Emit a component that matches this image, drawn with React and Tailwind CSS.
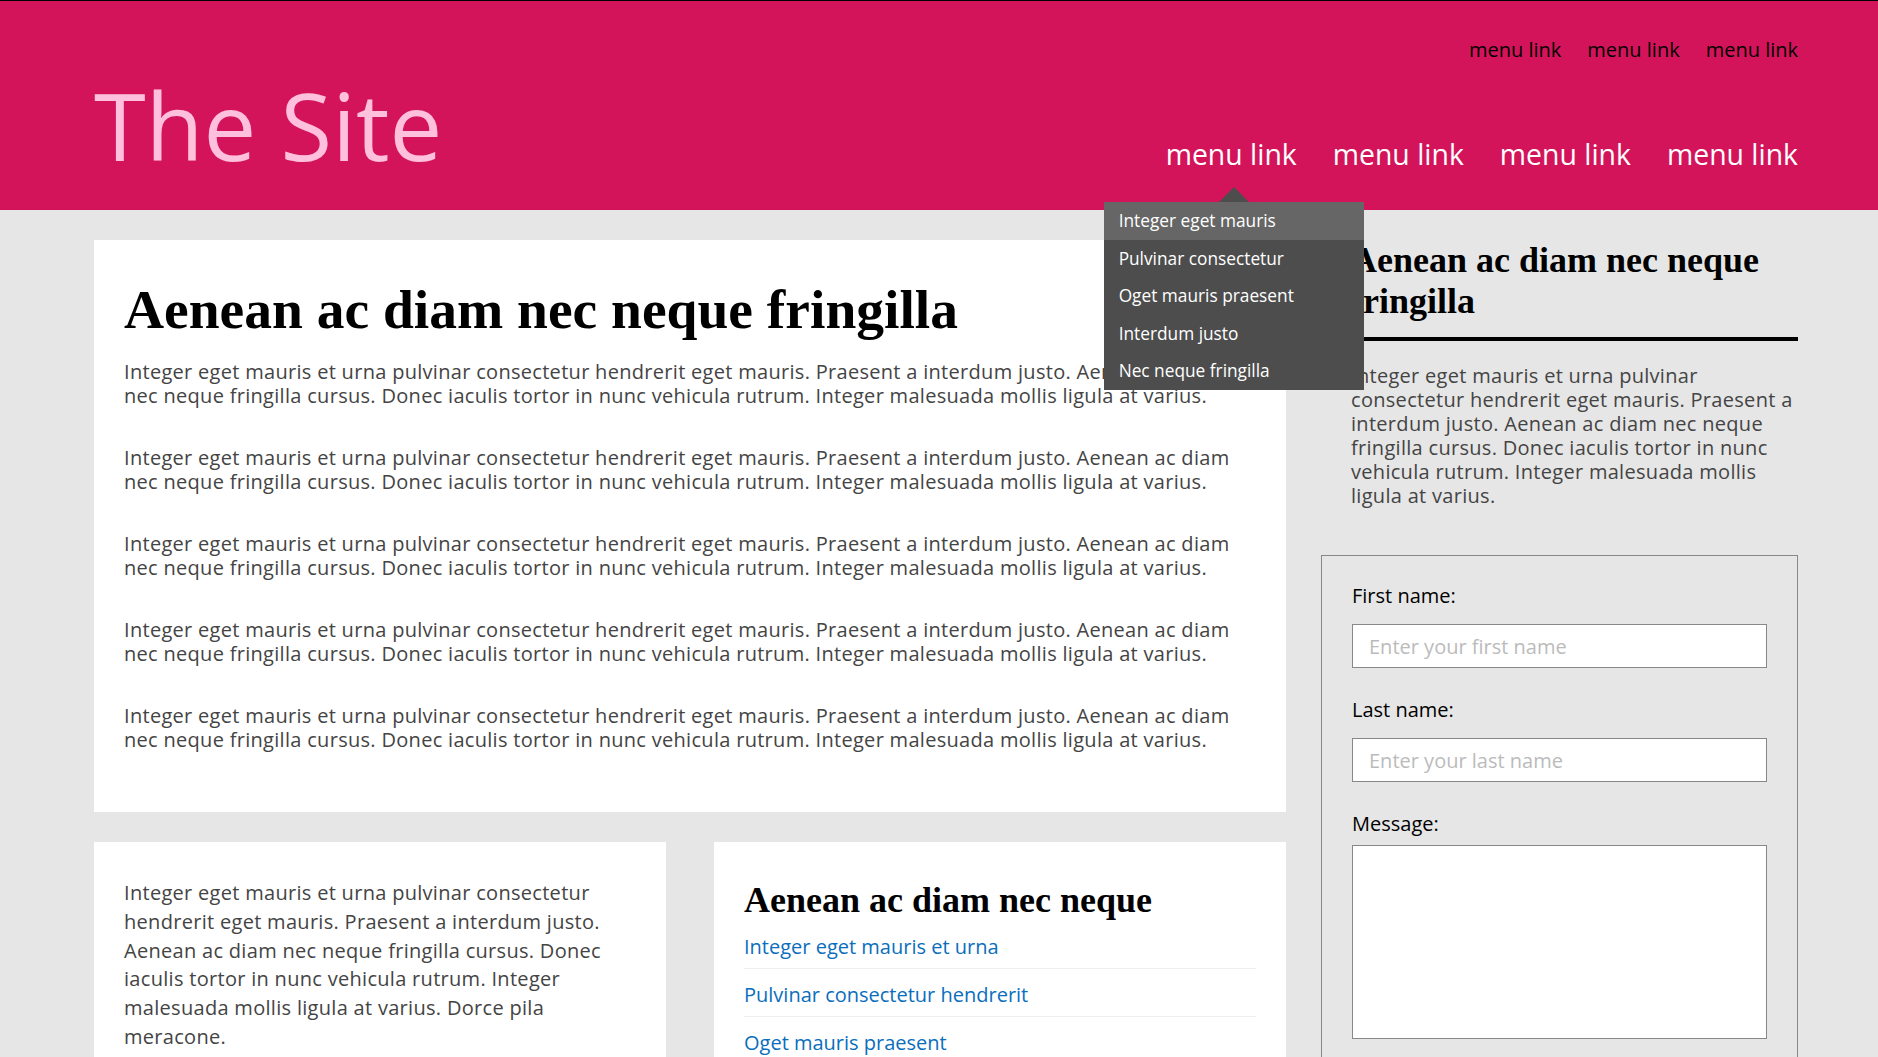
const dropdownItems = ['Integer eget mauris', 'Pulvinar consectetur', 'Oget mauris praesent', 'Interdum justo', 'Nec neque fringilla'];
const cardLinks = ['Integer eget mauris et urna', 'Pulvinar consectetur hendrerit', 'Oget mauris praesent', 'Interdum justo', 'Nec neque fringilla'];
const lorem = 'Integer eget mauris et urna pulvinar consectetur hendrerit eget mauris. Praesent a interdum justo. Aenean ac diam nec neque fringilla cursus. Donec iaculis tortor in nunc vehicula rutrum. Integer malesuada mollis ligula at varius.';

const Dropdown = () => (
    <div className="absolute left-[-62px] top-[65px] z-10 w-[260px] bg-[#4d4d4d] text-[17.3px] text-white">
        <span className="absolute left-[115px] top-[-15px] h-0 w-0 border-x-[15px] border-b-[15px] border-x-transparent border-b-[#4d4d4d]" />
        {dropdownItems.map((item, i) => (
            <a key={item} href="#" className={`block px-[15px] py-[7px] leading-[23.6px] ${i === 0 ? 'bg-[#666666]' : ''}`}>
                {item}
            </a>
        ))}
    </div>
);

export default function App() {
    return (
        <div className="min-h-screen bg-[#e6e6e6] font-['Open_Sans',sans-serif] text-[20px] leading-[24px] text-[#444]">
            <header className="h-[210px] border-t border-black bg-[#d4145a]">
                <div className="flex justify-between pl-[94px] pr-[80px]">
                    <a href="#" className="pt-[77px] text-[94px] leading-none text-[#ffc0dd]">The Site</a>
                    <div className="flex flex-col items-end pt-[37px]">
                        <nav className="flex gap-[26px] text-black">
                            <a href="#">menu link</a>
                            <a href="#">menu link</a>
                            <a href="#">menu link</a>
                        </nav>
                        <nav className="mt-[75px] flex gap-[36px] text-[28.4px] leading-[35px] text-white">
                            <span className="relative">
                                <a href="#">menu link</a>
                                <Dropdown />
                            </span>
                            <a href="#">menu link</a>
                            <a href="#">menu link</a>
                            <a href="#">menu link</a>
                        </nav>
                    </div>
                </div>
            </header>

            <main className="flex gap-[35px] pl-[94px] pr-[80px] pt-[30px]">
                <div className="flex w-[1192px] flex-col gap-[30px]">
                    <section className="bg-white px-[30px] pt-[38px] pb-[60px]">
                        <h1 className="mb-[18px] font-['Liberation_Serif',serif] text-[55.5px] font-bold leading-[64px] text-black">
                            Aenean ac diam nec neque fringilla
                        </h1>
                        <div className="flex flex-col gap-[38px] tracking-[0.3px]">
                            {[0, 1, 2, 3, 4].map((n) => <p key={n}>{lorem}</p>)}
                        </div>
                    </section>

                    <div className="grid grid-cols-2 gap-[48px]">
                        <section className="bg-white px-[30px] pt-[37px] pb-[30px] leading-[28.75px] tracking-[0.3px]">
                            <p>{lorem} Dorce pila meracone.</p>
                        </section>
                        <section className="bg-white px-[30px] pt-[38px] pb-[30px]">
                            <h2 className="font-['Liberation_Serif',serif] text-[36px] font-bold leading-[41px] text-black">
                                Aenean ac diam nec neque
                            </h2>
                            <ul>
                                {cardLinks.map((link) => (
                                    <li key={link} className="border-b border-[#eeeeee] pt-[14px] pb-[9px]">
                                        <a href="#" className="text-[#0a6ebd]">{link}</a>
                                    </li>
                                ))}
                            </ul>
                        </section>
                    </div>
                </div>

                <aside className="flex-1">
                    <div className="pl-[30px]">
                        <h2 className="border-b-4 border-black pb-[15px] font-['Liberation_Serif',serif] text-[36px] font-bold leading-[41px] text-black">
                            Aenean ac diam nec neque fringilla
                        </h2>
                        <p className="mt-[23px] tracking-[0.3px]">{lorem}</p>
                    </div>

                    <form className="mt-[47px] border border-[#888] px-[30px] pt-[28px] pb-[30px] text-black">
                        <label className="mb-[16px] block">First name:</label>
                        <input
                            type="text"
                            placeholder="Enter your first name"
                            className="mb-[30px] block h-[44px] w-full border border-[#888] bg-white px-[16px] placeholder:text-[#bbbbbb]"
                        />
                        <label className="mb-[16px] block">Last name:</label>
                        <input
                            type="text"
                            placeholder="Enter your last name"
                            className="mb-[30px] block h-[44px] w-full border border-[#888] bg-white px-[16px] placeholder:text-[#bbbbbb]"
                        />
                        <label className="mb-[9px] block">Message:</label>
                        <textarea className="block h-[194px] w-full resize-none border border-[#888] bg-white" />
                    </form>
                </aside>
            </main>
        </div>
    );
}
